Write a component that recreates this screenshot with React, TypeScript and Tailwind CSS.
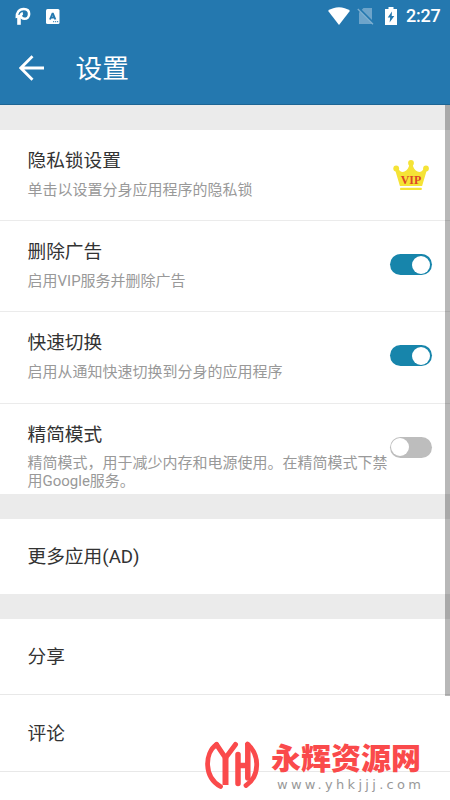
import { useState } from 'react'
import clsx from 'clsx'

interface Setting {
  title: string
  desc: string
  vip?: boolean
  on?: boolean
}

const settings: Setting[] = [
  { title: '隐私锁设置', desc: '单击以设置分身应用程序的隐私锁', vip: true },
  { title: '删除广告', desc: '启用VIP服务并删除广告', on: true },
  { title: '快速切换', desc: '启用从通知快速切换到分身的应用程序', on: true },
  { title: '精简模式', desc: '精简模式，用于减少内存和电源使用。在精简模式下禁用Google服务。', on: false },
]

function StatusBar() {
  return (
    <div className="flex h-8 items-center pl-[15px] pr-[10px]">
      <svg className="h-[19px] w-[17px]" viewBox="0 0 17 19" fill="none" stroke="#fff">
        <path d="M4 17.800V7.800" strokeWidth="3.600" />
        <path d="M1.800 11C1.200 5.500 4 2 8.800 2c3.600 0 5.300 2.200 5.300 4.900 0 3-2 4.900-4.700 4.900-2.200 0-3.500-1.400-3.500-3 0-1.300.8-2.200 2-2.400" strokeWidth="2.600" />
      </svg>
      <svg className="ml-[14px] h-[15px] w-[14px]" viewBox="0 0 14 15">
        <rect width="13.500" height="15" rx="1.500" fill="#fff" />
        <path d="M4 10.500 6.700 4 9.400 10.500M5 8.500h3.400" fill="none" stroke="#2478af" strokeWidth="1.900" strokeLinejoin="bevel" />
        <path d="M7 12.700h5.500" stroke="#2478af" strokeDasharray="1.200 .8" />
      </svg>
      <svg className="ml-auto h-[18px] w-[22px]" viewBox="0 0 22 18">
        <path d="M0 3.800C6.500-1.100 15.500-1.100 22 3.800L11 18Z" fill="#fff" />
      </svg>
      <svg className="ml-[7px] h-[18px] w-[17px]" viewBox="0 0 17 18">
        <path d="M6.500 1H15v16H2V5.500Z" fill="#6da4ca" />
        <path d="M1.800 1.200 17 16.400" stroke="#2478af" strokeWidth="2" />
        <path d="M.8 2 16 17.200" stroke="#7dafd0" strokeWidth="1.300" />
      </svg>
      <svg className="ml-[11px] h-[18px] w-[12px]" viewBox="0 0 12 18">
        <path d="M3.500 0h5v2H12v16H0V2h3.500Z" fill="#fff" />
        <path d="M7 4.500 2.700 10.400h2.500L4.600 15.500 9.300 9H6.700Z" fill="#2478af" />
      </svg>
      <span className="ml-[9px] w-[34px] whitespace-nowrap text-[18px] font-medium leading-8 tracking-[-0.2px]">2:27</span>
    </div>
  )
}

function Crown() {
  return (
    <svg className="h-[32px] w-[38px]" viewBox="0 0 38 32">
      <g fill="#f5e336">
        <circle cx="19" cy="2.900" r="2.900" />
        <circle cx="4.200" cy="8.500" r="2.900" />
        <circle cx="34" cy="8.500" r="2.900" />
        <path d="M3 9.500 6.500 9C8 12 10.500 12.500 12.500 11.500 15.500 10 17 7.500 17.300 4h3.400c.3 3.500 1.800 6 4.800 7.500 2 1 4.500.5 6-2.500l3.500.5-4.900 16.500H7.900Z" />
        <rect x="8.100" y="27.700" width="21.600" height="2.300" rx=".5" />
      </g>
      <text x="19" y="24" textAnchor="middle" textLength="20.500" lengthAdjust="spacingAndGlyphs" className="font-['Liberation_Serif',serif] text-[12px] font-bold" fill="#dc4528">VIP</text>
    </svg>
  )
}

function Toggle({ initial }: { initial: boolean }) {
  const [on, setOn] = useState(initial)

  return (
    <button
      role="switch"
      aria-checked={on}
      onClick={() => setOn(!on)}
      className={clsx('flex h-[21px] w-[42px] items-center rounded-full px-[1.500px]', on ? 'justify-end bg-[#1785ab]' : 'justify-start bg-[#bdbdbd]')}
    >
      <span className="size-[18px] rounded-full bg-white" />
    </button>
  )
}

function SettingRow({ item, last }: { item: Setting; last: boolean }) {
  return (
    <div className={clsx('flex border-[#ebebeb] pl-[27.500px]', last ? 'h-[90.500px]' : 'h-[91.200px] border-b-[1.500px]')}>
      <div className="w-[361px] shrink-0 pt-5">
        <h2 className="text-[18.700px] leading-[22px] text-[#333]">{item.title}</h2>
        <p className="mt-[9.500px] text-[15px] leading-[17.500px] text-[#999]">{item.desc}</p>
      </div>
      {item.vip ? (
        <div className="ml-[3px] pt-[30px]"><Crown /></div>
      ) : (
        <div className="ml-[1px] pt-[33px]"><Toggle initial={!!item.on} /></div>
      )}
    </div>
  )
}

function LinkRow({ label }: { label: string }) {
  return <div className="flex h-[75.500px] items-center pl-[27.500px] pt-[2px] text-[18.700px] text-[#333]">{label}</div>
}

function Watermark() {
  return (
    <div className="absolute left-[204px] top-[740px] flex">
      <svg className="h-[50px] w-[56px]" viewBox="0 0 56 50" fill="none" stroke="#fa4a4b" strokeWidth="5.500" strokeLinecap="round">
        <path d="M12.500 4.500C.5 13-.5 37 16.500 46.500" strokeWidth="4.800" />
        <path d="M12.500 4.500 21.500 18 31.500 4.500" strokeWidth="5" />
        <path d="M21.500 18v27" strokeWidth="6" strokeLinecap="butt" />
        <path d="M34 14.500v29M34 25.500h9" />
        <path d="M43.800 5v33" />
        <path d="M43.500 4C56 15 56 36 42 45.500" strokeWidth="4.800" />
      </svg>
      <div className="ml-[11px] whitespace-nowrap pt-[2px]">
        <div className="text-[30px] font-black leading-[34px] text-[#fa4a4b]">永辉资源网</div>
        <div className="ml-[6px] mt-px font-['DejaVu_Sans',sans-serif] text-[13px] leading-[15px] tracking-[3.300px] text-[#999]">www.yhkjjj.com</div>
      </div>
    </div>
  )
}

export default function App() {
  return (
    <div className="relative h-[800px] w-[450px] overflow-hidden bg-white font-[Roboto,'Noto_Sans_CJK_SC',sans-serif]">
      <header className="h-[105px] border-b border-[#1d6594] bg-[#2478af] text-white">
        <StatusBar />
        <div className="flex h-[72px] items-center pl-[19px]">
          <svg className="h-[26px] w-[26px]" viewBox="0 0 26 26" fill="none" stroke="#fff" strokeWidth="2.800">
            <path d="M25 13H2M13.500 1.300 1.800 13l11.700 11.700" />
          </svg>
          <h1 className="ml-[30.500px] pt-[2px] text-[26.700px] leading-[36px]">设置</h1>
        </div>
      </header>

      <main>
        <div className="h-[25px] bg-[#ebebeb]" />
        {settings.map((item, i) => (
          <SettingRow key={item.title} item={item} last={i === settings.length - 1} />
        ))}
        <div className="h-[24.500px] bg-[#ebebeb]" />
        <LinkRow label="更多应用(AD)" />
        <div className="h-[24.500px] bg-[#ebebeb]" />
        <LinkRow label="分享" />
        <div className="h-px bg-[#e8e8e8]" />
        <LinkRow label="评论" />
        <div className="h-px bg-[#e8e8e8]" />
      </main>

      {/* Scroll indicator */}
      <div className="absolute right-0 top-[105px] h-[591px] w-[5px] bg-black/28" />
      <Watermark />
    </div>
  )
}
